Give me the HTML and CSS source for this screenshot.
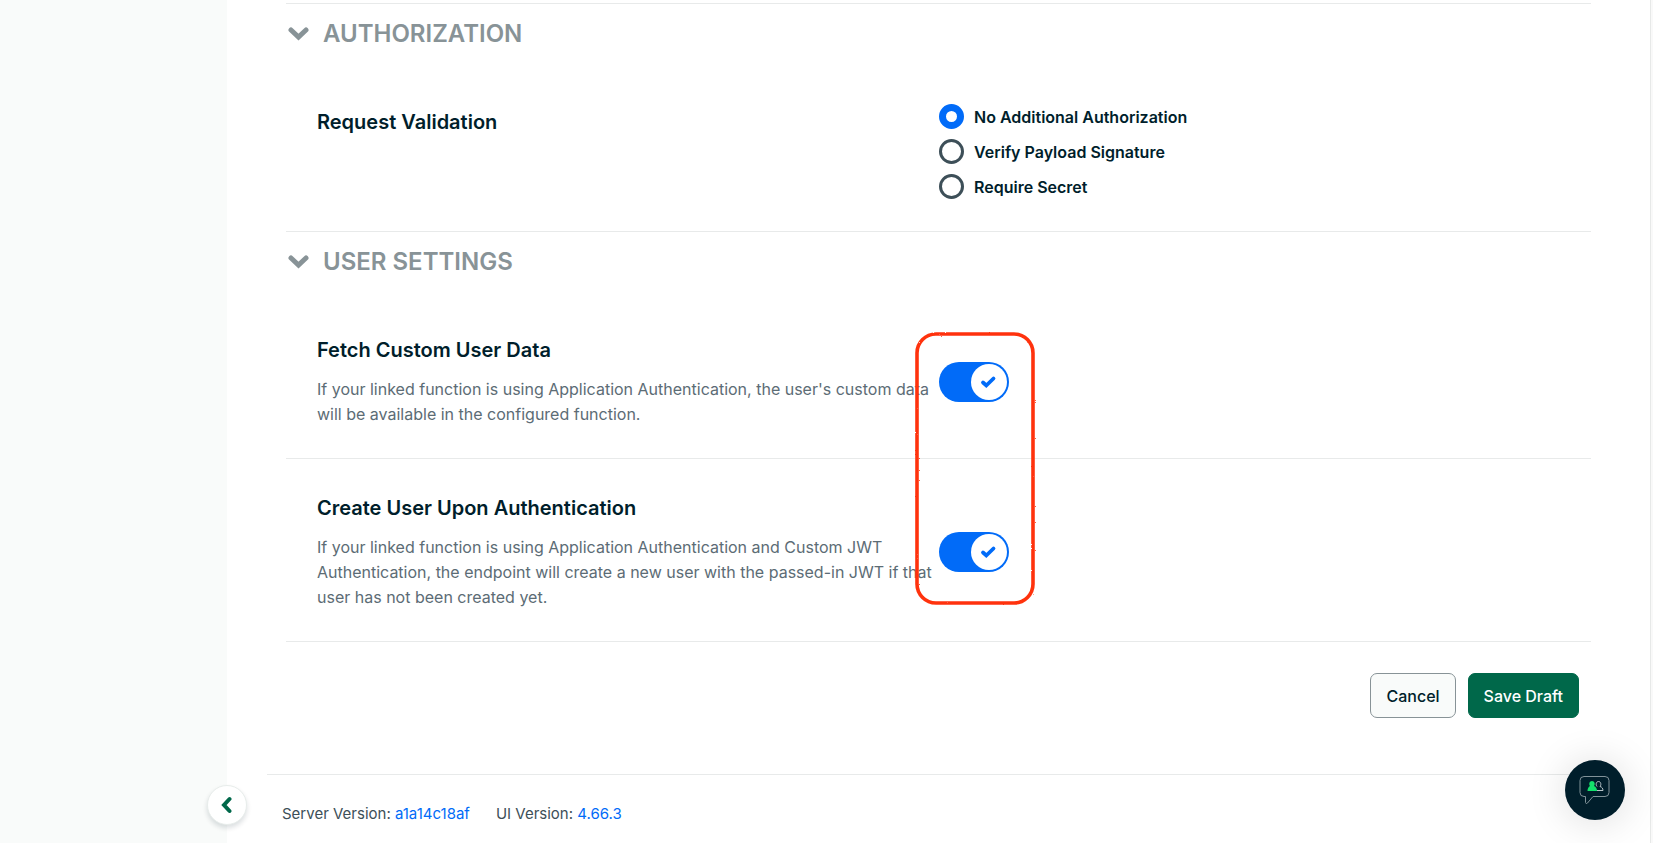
FILE: index.html
```html
<!DOCTYPE html>
<html lang="en">
<head>
<meta charset="utf-8">
<title>Endpoint Settings</title>
<link rel="stylesheet" href="styles.css">
</head>
<body>
<div class="app">
  <aside class="sidebar">
    <button class="collapse" type="button" aria-label="Collapse navigation">
      <svg width="12" height="18" viewBox="0 0 12 18"><path d="M9.500 3 4 9 9.500 15" fill="none" stroke="#00684a" stroke-width="4" stroke-linecap="round"/></svg>
    </button>
  </aside>
  <main class="main">
    <form class="settings">
      <section class="section">
        <h2 class="section-title">
          <svg width="22" height="14" viewBox="0 0 22 14"><path d="M3 3 10.500 10 18 3" fill="none" stroke="#889397" stroke-width="5" stroke-linecap="round"/></svg>
          AUTHORIZATION
        </h2>
        <div class="row">
          <h3 class="row-title" id="validation">Request Validation</h3>
          <div class="radios" role="radiogroup" aria-labelledby="validation">
            <label class="radio"><input type="radio" name="validation" checked>No Additional Authorization</label>
            <label class="radio"><input type="radio" name="validation">Verify Payload Signature</label>
            <label class="radio"><input type="radio" name="validation">Require Secret</label>
          </div>
        </div>
      </section>
      <section class="section">
        <h2 class="section-title">
          <svg width="22" height="14" viewBox="0 0 22 14"><path d="M3 3 10.500 10 18 3" fill="none" stroke="#889397" stroke-width="5" stroke-linecap="round"/></svg>
          USER SETTINGS
        </h2>
        <div class="row">
          <div>
            <h3 class="row-title"><label for="fetch">Fetch Custom User Data</label></h3>
            <p class="description">If your linked function is using Application Authentication, the user's custom data<br>will be available in the configured function.</p>
          </div>
          <div class="toggle">
            <input type="checkbox" role="switch" id="fetch" checked>
            <svg class="check" width="17" height="14" viewBox="0 0 17 14"><path d="M3 7.500 6.300 10.500 13.500 3.500" fill="none" stroke="#016bf8" stroke-width="3.800" stroke-linecap="round"/></svg>
          </div>
        </div>
        <div class="row ruled">
          <div>
            <h3 class="row-title"><label for="create">Create User Upon Authentication</label></h3>
            <p class="description">If your linked function is using Application Authentication and Custom JWT<br>Authentication, the endpoint will create a new user with the passed-in JWT if that<br>user has not been created yet.</p>
          </div>
          <div class="toggle">
            <input type="checkbox" role="switch" id="create" checked>
            <svg class="check" width="17" height="14" viewBox="0 0 17 14"><path d="M3 7.500 6.300 10.500 13.500 3.500" fill="none" stroke="#016bf8" stroke-width="3.800" stroke-linecap="round"/></svg>
          </div>
        </div>
        <svg class="marker" width="124" height="278" viewBox="0 0 124 278">
          <filter id="rough" x="-5%" y="-5%" width="110%" height="110%"><feTurbulence type="fractalNoise" baseFrequency="0.5" numOctaves="2" seed="4"/><feDisplacementMap in="SourceGraphic" scale="2"/></filter>
          <rect x="4" y="4" width="116" height="269" rx="19" fill="none" stroke="#ff330c" stroke-width="3.600" filter="url(#rough)"/>
        </svg>
      </section>
      <div class="actions">
        <button class="button cancel" type="button">Cancel</button>
        <button class="button save" type="submit">Save Draft</button>
      </div>
    </form>
    <footer class="footer">
      <span>Server Version: <a href="#server">a1a14c18af</a></span>
      <span>UI Version: <a href="#ui">4.66.3</a></span>
    </footer>
  </main>
</div>
<button class="chat" type="button" aria-label="Open chat">
  <svg width="32" height="32" viewBox="0 0 32 32" fill="none" stroke-width="1">
    <path d="M5 2.500H26Q30 2.500 30 6.500V18.500Q30 22.500 26 22.500H14L8.500 29Q7 30.500 6.500 28.500V22.500H5Q1 22.500 1 18.500V6.500Q1 2.500 5 2.500Z" stroke="#819299"/>
    <path d="M18 12.500C16.500 11 17 7.500 19.500 7.500S22.500 11 21 12.500C23 13 24 14.500 24 16.500H17.500" stroke="#b8c4c8"/>
    <path d="M11 12C9.500 10 10.500 7 13 7S16.500 10 15 12C17 13 18 14.500 18 17H8.500C8.500 14.500 9.500 13 11 12Z" fill="#13e06b"/>
  </svg>
</button>
</body>
</html>
```
FILE: styles.css
```css
* { box-sizing: border-box; }

body {
  margin: 0;
  background: #fff;
  color: #001e2b;
  font-family: Inter, "Liberation Sans", sans-serif;
  font-size: 16px;
}

h2, h3, p { margin: 0; }

.app {
  display: flex;
  min-height: 100vh;
  border-right: 2px solid #f9f9f9;
}

.sidebar {
  position: relative;
  flex: 0 0 227px;
  background: #f9fbfa;
}

.collapse {
  position: absolute;
  right: -20px;
  bottom: 18px;
  display: grid;
  place-items: center;
  width: 40px;
  height: 40px;
  padding: 0 2px 0 0;
  border: 1px solid #e8edeb;
  border-radius: 50%;
  background: #fff;
  box-shadow: 0 3px 5px rgb(0 30 43 / 14%);
}

.main {
  flex: 1;
  padding: 3px 40px 0;
  border-right: 1px solid #e7e9e8;
}

.settings { padding: 0 19px; }

.section {
  position: relative;
  border-top: 1px solid #e8eaea;
}

.section-title {
  display: flex;
  align-items: center;
  gap: 13px;
  height: 69px;
  padding: 0 0 10px 2px;
  color: #889397;
  font-size: 24px;
  font-weight: 600;
}

.row {
  display: grid;
  grid-template-columns: calc(50% - 15px) 1fr;
  padding: 31px 0 31px 31px;
}

.ruled { border-top: 1px solid #e8eaea; }

.row-title {
  font-size: 20px;
  font-weight: 600;
  line-height: 37px;
}

.description {
  margin-top: 8px;
  color: #5c6c75;
  font-size: 16px;
  line-height: 25px;
  white-space: nowrap;
}

.radios {
  display: grid;
  gap: 10px;
  padding-bottom: 1px;
}

.radio {
  display: flex;
  align-items: center;
  gap: 10px;
  height: 25px;
  font-size: 16px;
  font-weight: 600;
}

.radio input {
  appearance: none;
  width: 25px;
  height: 25px;
  margin: 0;
  border: 3px solid #3d4f58;
  border-radius: 50%;
  background: #fff;
}

.radio input:checked { border: 7px solid #016bf8; }

.toggle {
  position: relative;
  align-self: center;
  width: 70px;
  padding-top: 4px;
}

.toggle input {
  display: flex;
  justify-content: flex-end;
  appearance: none;
  width: 70px;
  height: 40px;
  margin: 0;
  padding: 2px;
  border-radius: 20px;
  background: #016bf8;
}

.toggle input::before {
  content: "";
  width: 36px;
  height: 36px;
  border-radius: 50%;
  background: #fff;
}

.check {
  position: absolute;
  right: 12px;
  bottom: 13px;
  pointer-events: none;
}

.marker {
  position: absolute;
  top: 98px;
  left: calc(50% - 26px);
  pointer-events: none;
}

.actions {
  display: flex;
  justify-content: flex-end;
  gap: 12px;
  padding: 31px 12px 56px;
  border-top: 1px solid #e8eaea;
}

.button {
  height: 45px;
  padding: 0 15px;
  border: 1px solid #889397;
  border-radius: 7px;
  font: 500 16px Inter, "Liberation Sans", sans-serif;
}

.cancel {
  background: #f9fbfa;
  color: #001e2b;
}

.save {
  border-color: #00684a;
  background: #00684a;
  color: #fff;
}

.footer {
  display: flex;
  gap: 26px;
  padding: 27px 15px 18px;
  border-top: 1px solid #e8eaea;
  color: #3d4f58;
  font-size: 15px;
  line-height: 23px;
}

.footer a {
  color: #016bf8;
  text-decoration: none;
}

.chat {
  position: fixed;
  right: 28px;
  bottom: 23px;
  display: grid;
  place-items: center;
  width: 60px;
  height: 60px;
  padding: 0;
  border: 0;
  border-radius: 50%;
  background: #001e2b;
  box-shadow: 0 2px 40px rgb(0 0 0 / 14%);
}
```
